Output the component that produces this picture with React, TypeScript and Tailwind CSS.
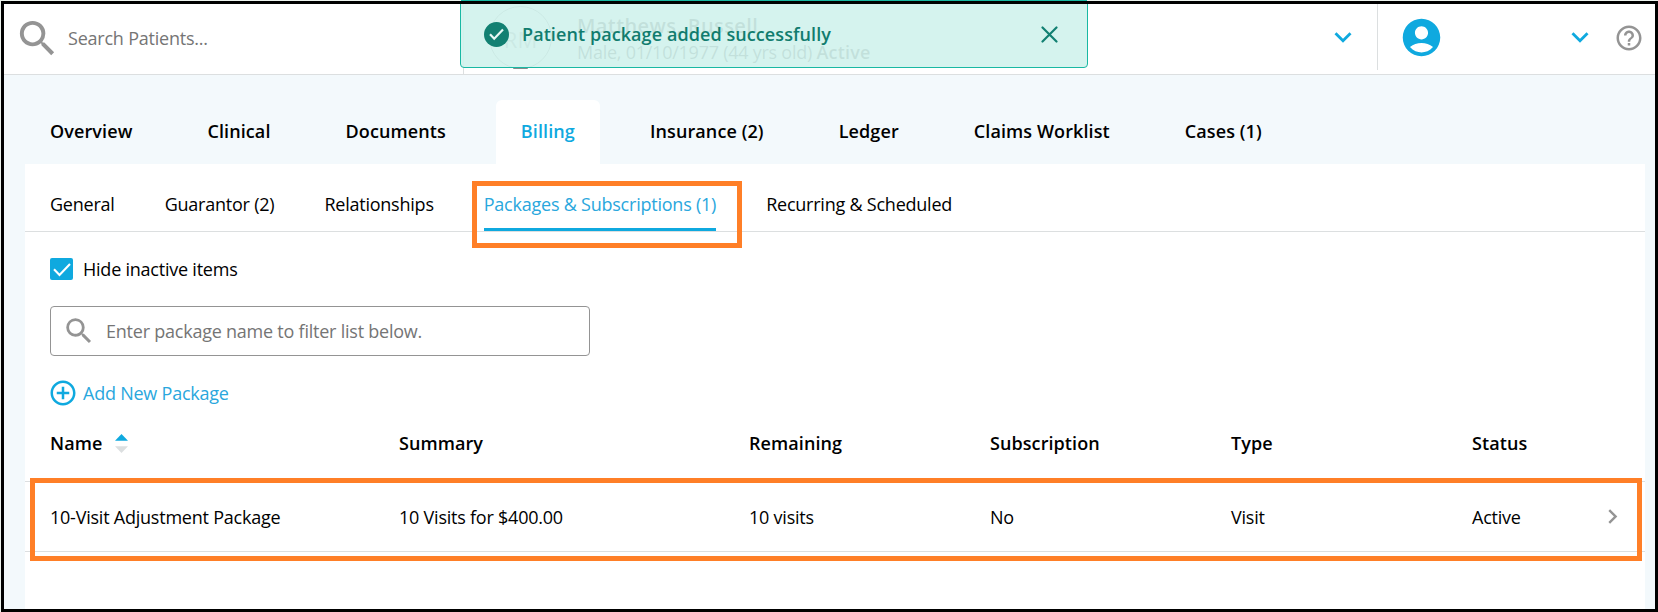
import { clsx } from 'clsx';
import type { ReactNode } from 'react';
import {
  MdAccountCircle,
  MdAddCircleOutline,
  MdChevronRight,
  MdExpandMore,
  MdHelpOutline,
  MdSearch,
} from 'react-icons/md';

const tabs = [
  'Overview',
  'Clinical',
  'Documents',
  'Billing',
  'Insurance (2)',
  'Ledger',
  'Claims Worklist',
  'Cases (1)',
];

const subTabs = [
  'General',
  'Guarantor (2)',
  'Relationships',
  'Packages & Subscriptions (1)',
  'Recurring & Scheduled',
];

const columns = ['Name', 'Summary', 'Remaining', 'Subscription', 'Type', 'Status'];
const row = ['10-Visit Adjustment Package', '10 Visits for $400.00', '10 visits', 'No', 'Visit', 'Active'];

function TableRow({ children, className }: { children: ReactNode; className: string }) {
  return (
    <div
      className={clsx(
        'grid grid-cols-[349px_350px_241px_241px_241px_1fr] items-center border-b border-[#dcdfe0] pl-[25px]',
        className,
      )}
    >
      {children}
    </div>
  );
}

function Toast() {
  return (
    <div className="absolute -top-1 left-[456px] flex h-[68px] w-[628px] items-center rounded-[4px] border border-[#19b8a3] bg-[rgba(208,242,236,0.9)] pl-[23px] pr-[29px] text-[#117c6e]">
      <svg className="size-[25px] shrink-0" viewBox="0 0 25 25">
        <circle cx="12.5" cy="12.5" r="12.5" fill="#128072" />
        <path d="M6 12.2l4.2 4.5 8.8-9.2" fill="none" stroke="#e6f8f5" strokeWidth="2.2" />
      </svg>
      <span className="ml-[13px] font-semibold tracking-[0.08px]">Patient package added successfully</span>
      <svg className="ml-auto size-[17px]" viewBox="0 0 17 17">
        <path d="M1.5 1.5l14 14M15.5 1.5l-14 14" stroke="#128072" strokeWidth="2.2" strokeLinecap="round" />
      </svg>
    </div>
  );
}

function Header() {
  return (
    <header className="relative flex h-[71px] shrink-0 border-b border-[#dcdfe0] bg-white">
      <div className="flex w-[460px] items-center border-r border-[#dcdfe0] pl-[10px]">
        <MdSearch className="-mt-[2px] size-[47px] text-[#949494]" />
        <span className="-mt-[2px] ml-[7px] tracking-[-0.22px] text-[#757575]">Search Patients...</span>
      </div>
      <div className="flex flex-1 items-start pl-[25px] pt-[2px]">
        <div className="flex size-[63px] items-center justify-center rounded-full border border-[#999] pt-[4px] text-[22px] text-[#999]">
          RM
        </div>
        <div className="ml-[25px] pt-[7px] leading-[26px] text-[#444]">
          <div className="text-[20px] font-semibold tracking-[0.4px]">Matthews, Russell</div>
          <div className="tracking-[-0.25px]">
            Male, 01/10/1977 (44 yrs old) <b className="font-semibold tracking-[0.2px]">Active</b>
          </div>
        </div>
      </div>
      <div className="flex h-[66px] w-[52px] items-center border-r border-[#dcdfe0]">
        <MdExpandMore className="size-[34px] text-[#0fa9df]" />
      </div>
      <div className="flex w-[277px] items-center pl-[21px] pb-[3px]">
        <MdAccountCircle className="size-[45px] text-[#0fa9df]" />
        <MdExpandMore className="-mt-px ml-[119px] size-[34px] text-[#0fa9df]" />
        <MdHelpOutline className="ml-[17px] mt-px size-[30px] text-[#949494]" />
      </div>
      <Toast />
      <div className="absolute left-[509px] top-16 h-px w-[15px] rounded-b-full bg-[#858b8b]" />
    </header>
  );
}

export default function App() {
  return (
    <div className="h-[612px] w-[1658px] bg-[#edf3ee] pl-px font-['Open_Sans',sans-serif] text-[18px] leading-[25px] text-black">
      <div className="ml-[460px] h-px w-[626px] bg-[#19b8a3]" />
      <div className="flex h-[611px] flex-col overflow-hidden border-[3px] border-black bg-[#f3f9fc]">
        <Header />
        <nav className="ml-[21px] mt-[25px] flex h-16 shrink-0 gap-[25px]">
          {tabs.map((tab) => (
            <div
              key={tab}
              className={clsx(
                'flex items-center whitespace-nowrap rounded-t-[6px] px-[25px] pb-[2px] font-semibold tracking-[0.1px]',
                tab === 'Billing' && 'bg-white text-[#0fa9df]',
              )}
            >
              {tab}
            </div>
          ))}
        </nav>
        <main className="ml-[21px] w-[1620px] flex-1 bg-white tracking-[-0.23px]">
          <div className="flex h-[68px] gap-[50px] border-b border-[#dcdfe0] pl-[25px]">
            {subTabs.map((tab) => {
              const active = tab.startsWith('Packages');
              return (
                <div
                  key={tab}
                  className={clsx(
                    'relative flex h-[67px] items-center whitespace-nowrap border-b-[3px] pt-[17px]',
                    active ? 'border-[#0fa9df] text-[#2aa7dd]' : 'border-transparent',
                  )}
                >
                  {tab}
                  {active && (
                    <div className="absolute -left-3 -right-[26px] top-[17px] h-[67px] border-[5px] border-[#ff7f27]" />
                  )}
                </div>
              );
            })}
          </div>
          <div className="pl-[25px]">
            <div className="flex h-[74px] items-center gap-[10px]">
              <svg className="h-[22px] w-[23px]" viewBox="0 0 23 22">
                <rect width="23" height="22" rx="2" fill="#0fa9df" />
                <path d="M4 11.3l5.5 5.6L20 6" fill="none" stroke="#fff" strokeWidth="2.1" />
              </svg>
              Hide inactive items
            </div>
            <div className="flex h-[50px] w-[540px] items-center rounded-[4px] border border-[#949494] pl-[11px] text-[#757575]">
              <MdSearch className="-mt-px size-[34px] text-[#949494]" />
              <span className="ml-[10px]">Enter package name to filter list below.</span>
            </div>
            <div className="-ml-[2px] mt-[22px] flex h-[30px] items-center gap-[5px] text-[#2aa7dd]">
              <MdAddCircleOutline className="size-[30px] text-[#0fa9df]" />
              Add New Package
            </div>
          </div>
          <TableRow className="h-[74px] pb-[2px] font-semibold tracking-[0.08px]">
            {columns.map((column) => (
              <div key={column} className="flex items-center gap-[13px]">
                {column}
                {column === 'Name' && (
                  <svg className="h-[19px] w-[13px]" viewBox="0 0 13 19">
                    <path d="M0 6.7L6.5 0 13 6.7z" fill="#0fa9df" />
                    <path d="M0 12.3h13L6.5 19z" fill="#dcdfe0" />
                  </svg>
                )}
              </div>
            ))}
          </TableRow>
          <div className="relative">
            <TableRow className="h-[70px]">
              {row.map((cell, index) => (
                <div key={columns[index]} className="flex items-center justify-between pr-[18px]">
                  <span className="pt-[2px]">{cell}</span>
                  {index === row.length - 1 && <MdChevronRight className="size-[29px] text-[#949494]" />}
                </div>
              ))}
            </TableRow>
            <div className="absolute -top-1 left-[5px] h-[83px] w-[1612px] border-[5px] border-[#ff7f27]" />
          </div>
        </main>
      </div>
    </div>
  );
}
